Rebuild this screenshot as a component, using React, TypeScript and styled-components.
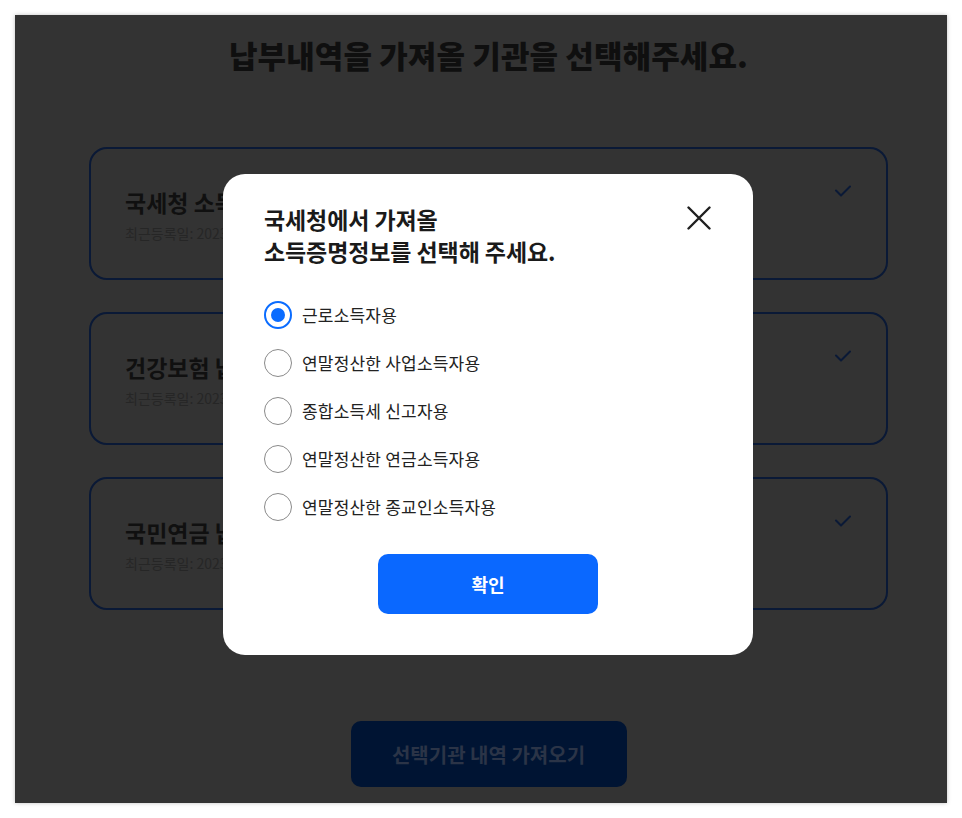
import { useState } from "react";
import styled, { createGlobalStyle } from "styled-components";

const GlobalStyle = createGlobalStyle`
  html, body {
    margin: 0;
    background: #ffffff;
    font-family: "Noto Sans CJK KR", "Noto Sans", sans-serif;
  }
  * {
    box-sizing: border-box;
  }
`;

const Root = styled.div`
  padding: 15px;
`;

const Frame = styled.div`
  position: relative;
  width: 932px;
  height: 788px;
  background: #333333;
  box-shadow: 0 0 4px rgba(0, 0, 0, 0.25);
  overflow: hidden;
`;

const Page = styled.div`
  display: flex;
  flex-direction: column;
  align-items: center;
  padding: 18px 59px 0 74px;
`;

const PageTitle = styled.h1`
  margin: 0;
  font-size: 31px;
  line-height: 44px;
  font-weight: 800;
  letter-spacing: 0.1px;
  color: #0f0f0f;
`;

const CardList = styled.div`
  display: flex;
  flex-direction: column;
  gap: 32px;
  width: 100%;
  margin-top: 70px;
`;

const Card = styled.div`
  display: flex;
  align-items: center;
  height: 133px;
  padding: 0 34px 0 34px;
  border: 2px solid #0a1936;
  border-radius: 18px;
`;

const CardBody = styled.div`
  flex: 1;
  display: flex;
  flex-direction: column;
  gap: 6px;
  padding-top: 2px;
`;

const CardTitle = styled.div`
  font-size: 23px;
  line-height: 30px;
  font-weight: 700;
  color: #101010;
`;

const CardMeta = styled.div`
  font-size: 14px;
  line-height: 20px;
  color: #262626;
`;

const CardCheck = styled.svg`
  align-self: flex-start;
  margin-top: 35px;
  width: 18px;
  height: 14px;
`;

const FetchButton = styled.button`
  margin-top: 111px;
  width: 276px;
  height: 66px;
  border: none;
  border-radius: 10px;
  background: #001433;
  color: #2b3447;
  font-family: inherit;
  font-size: 20px;
  font-weight: 700;
`;

const Overlay = styled.div`
  position: absolute;
  inset: 0;
  display: flex;
  align-items: center;
  justify-content: center;
  padding: 11px 0 0 14px;
`;

const Modal = styled.div`
  width: 530px;
  background: #ffffff;
  border-radius: 22px;
  padding: 29px 41px 41px 41px;
  display: flex;
  flex-direction: column;
`;

const ModalHeader = styled.div`
  display: flex;
  justify-content: space-between;
  align-items: flex-start;
`;

const ModalTitle = styled.h2`
  margin: 0;
  font-size: 23px;
  line-height: 32px;
  font-weight: 700;
  letter-spacing: -0.1px;
  color: #1a1a1a;
`;

const CloseButton = styled.button`
  border: none;
  background: none;
  padding: 0;
  margin: 3px 1px 0 0;
  width: 24px;
  height: 24px;
  cursor: pointer;
`;

const OptionList = styled.div`
  display: flex;
  flex-direction: column;
  gap: 20px;
  margin-top: 34px;
`;

const OptionRow = styled.label`
  display: flex;
  align-items: center;
  gap: 10px;
  cursor: pointer;
`;

const RadioCircle = styled.span<{ $checked: boolean }>`
  position: relative;
  flex: none;
  width: 28px;
  height: 28px;
  border-radius: 50%;
  border: ${({ $checked }) => ($checked ? "2px solid #0a6cff" : "1px solid #8a8a8a")};
  background: #ffffff;

  &::after {
    content: "";
    display: ${({ $checked }) => ($checked ? "block" : "none")};
    position: absolute;
    left: 50%;
    top: 50%;
    width: 14px;
    height: 14px;
    margin: -7px 0 0 -7px;
    border-radius: 50%;
    background: #0a6cff;
  }
`;

const OptionLabel = styled.span`
  font-size: 17px;
  line-height: 28px;
  color: #222222;
  letter-spacing: 0.2px;
`;

const ConfirmButton = styled.button`
  align-self: center;
  margin-top: 33px;
  width: 220px;
  height: 60px;
  border: none;
  border-radius: 10px;
  background: #0a68ff;
  color: #ffffff;
  font-family: inherit;
  font-size: 18px;
  font-weight: 700;
  cursor: pointer;
`;

const cards = [
  { title: "국세청 소득 납부내역", date: "최근등록일: 2023.05.12" },
  { title: "건강보험 납부내역", date: "최근등록일: 2023.05.12" },
  { title: "국민연금 납부내역", date: "최근등록일: 2023.05.12" },
];

const options = [
  "근로소득자용",
  "연말정산한 사업소득자용",
  "종합소득세 신고자용",
  "연말정산한 연금소득자용",
  "연말정산한 종교인소득자용",
];

export default function App() {
  const [selected, setSelected] = useState(0);

  return (
    <Root>
      <GlobalStyle />
      <Frame>
        <Page>
          <PageTitle>납부내역을 가져올 기관을 선택해주세요.</PageTitle>
          <CardList>
            {cards.map((card) => (
              <Card key={card.title}>
                <CardBody>
                  <CardTitle>{card.title}</CardTitle>
                  <CardMeta>{card.date}</CardMeta>
                </CardBody>
                <CardCheck viewBox="0 0 18 14" fill="none">
                  <path
                    d="M2 6.5 L7 11.5 L16 2.5"
                    stroke="#0a1936"
                    strokeWidth="2"
                    strokeLinecap="round"
                    strokeLinejoin="round"
                  />
                </CardCheck>
              </Card>
            ))}
          </CardList>
          <FetchButton>선택기관 내역 가져오기</FetchButton>
        </Page>

        <Overlay>
          <Modal>
            <ModalHeader>
              <ModalTitle>
                국세청에서 가져올
                <br />
                소득증명정보를 선택해 주세요.
              </ModalTitle>
              <CloseButton aria-label="닫기">
                <svg width="24" height="24" viewBox="0 0 24 24" fill="none">
                  <path
                    d="M1.5 1.5 L22.5 22.5 M22.5 1.5 L1.5 22.5"
                    stroke="#1f1f1f"
                    strokeWidth="2.4"
                    strokeLinecap="round"
                  />
                </svg>
              </CloseButton>
            </ModalHeader>
            <OptionList>
              {options.map((option, i) => (
                <OptionRow key={option} onClick={() => setSelected(i)}>
                  <RadioCircle $checked={selected === i} />
                  <OptionLabel>{option}</OptionLabel>
                </OptionRow>
              ))}
            </OptionList>
            <ConfirmButton>확인</ConfirmButton>
          </Modal>
        </Overlay>
      </Frame>
    </Root>
  );
}
